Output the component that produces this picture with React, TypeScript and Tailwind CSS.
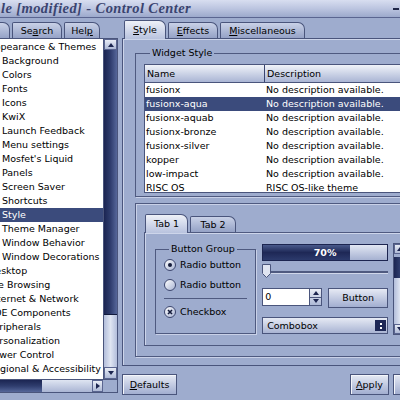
import React from "react";

const tree: [string, boolean][] = [
  ["Appearance & Themes", true],
  ["Background", false],
  ["Colors", false],
  ["Fonts", false],
  ["Icons", false],
  ["KwiX", false],
  ["Launch Feedback", false],
  ["Menu settings", false],
  ["Mosfet's Liquid", false],
  ["Panels", false],
  ["Screen Saver", false],
  ["Shortcuts", false],
  ["Style", false],
  ["Theme Manager", false],
  ["Window Behavior", false],
  ["Window Decorations", false],
  ["Desktop", true],
  ["File Browsing", true],
  ["Internet & Network", true],
  ["KDE Components", true],
  ["Peripherals", true],
  ["Personalization", true],
  ["Power Control", true],
  ["Regional & Accessibility", true],
  ["Security & Privacy", true],
];

const styles = [
  ["fusionx", "No description available."],
  ["fusionx-aqua", "No description available."],
  ["fusionx-aquab", "No description available."],
  ["fusionx-bronze", "No description available."],
  ["fusionx-silver", "No description available."],
  ["kopper", "No description available."],
  ["low-impact", "No description available."],
  ["RISC OS", "RISC OS-like theme"],
];

// underlined mnemonic letter
const Mn = ({ t, i }: { t: string; i: number }) => (
  <>
    {t.slice(0, i)}
    <span className="underline underline-offset-[1px]">{t[i]}</span>
    {t.slice(i + 1)}
  </>
);

const Tri = ({ dir, className = "" }: { dir: "up" | "down" | "right"; className?: string }) => {
  const pts = dir === "up" ? "0,5 3,1 6,5" : dir === "down" ? "0,1 6,1 3,5" : "1,0 5,3 1,6";
  return (
    <svg width="6" height="6" viewBox="0 0 6 6" className={className}>
      <polygon points={pts} fill="currentColor" />
    </svg>
  );
};

function Tab({ w, sel, children }: { w: string; sel?: boolean; children: React.ReactNode }) {
  return (
    <div
      className={`${w} flex items-center justify-center border border-b-0 border-[#4a557c] rounded-tl-[2px] rounded-tr-[7px] ${
        sel
          ? "h-[19px] bg-linear-to-b from-[#eef1f8] to-[#b8c2de] relative z-10 -mb-px"
          : "h-[16px] bg-linear-to-b from-[#c9d1e7] to-[#95a2c6]"
      }`}
    >
      {children}
    </div>
  );
}

function Btn({ w, children }: { w: string; children: React.ReactNode }) {
  return (
    <div
      className={`${w} h-[21px] shrink-0 flex items-center justify-center border border-[#4a557c] bg-linear-to-b from-[#e6eaf4] via-[#c3cbe2] to-[#a2aed0] shadow-[inset_1px_1px_0_#f4f6fb]`}
    >
      {children}
    </div>
  );
}

function ArrowBox({ dir, className = "" }: { dir: "up" | "down" | "right"; className?: string }) {
  return (
    <div
      className={`flex items-center justify-center border border-[#5a6590] bg-linear-to-b from-[#e9edf6] to-[#aeb9d6] text-[#1c2550] ${className}`}
    >
      <Tri dir={dir} />
    </div>
  );
}

export default function App() {
  return (
    <div className="w-[400px] h-[400px] overflow-hidden bg-[#9eacce] text-[9.5px] leading-none text-black font-['DejaVu_Sans',sans-serif] flex flex-col">
      {/* title bar */}
      <div className="h-[18px] shrink-0 flex items-center justify-between border-b border-[#5a6590] bg-linear-to-b from-[#d8def0] via-[#bcc5e0] to-[#9ca9cc]">
        <span className="pl-[1px] text-[14.5px] font-bold italic tracking-[0.4px] text-[#3a4470] font-['Liberation_Serif',serif] whitespace-nowrap">
          le [modified] - Control Center
        </span>
        <span className="w-[6px] h-[2px] bg-[#1e2648] mr-[1px]" />
      </div>

      <div className="flex flex-1 min-h-0">
        {/* left side */}
        <div className="w-[119px] shrink-0 flex flex-col">
          <div className="h-[20px] flex items-end gap-[2px]">
            <div className="w-[10px] h-[16px] border border-b-0 border-l-0 border-[#4a557c] rounded-tr-[7px] bg-linear-to-b from-[#c9d1e7] to-[#95a2c6]" />
            <Tab w="w-[50px]">
              <Mn t="Search" i={2} />
            </Tab>
            <Tab w="w-[36px]">
              <Mn t="Help" i={3} />
            </Tab>
          </div>
          <div className="h-[355px] w-[118px] border border-l-0 border-[#4a557c] flex flex-col">
            <div className="flex flex-1 min-h-0">
              <div className="flex-1 bg-white overflow-hidden pt-[1px]">
                {tree.map(([name, top]) => (
                  <div
                    key={name}
                    className={`h-[14px] flex items-center whitespace-nowrap ${
                      name === "Style" ? "bg-[#3b4b7c] text-white" : ""
                    }`}
                  >
                    <span className={top ? "ml-[-12px]" : "ml-[2px]"}>{name}</span>
                  </div>
                ))}
              </div>
              <div className="w-[14px] flex flex-col border-l border-[#4a557c]">
                <ArrowBox dir="up" className="h-[11px]" />
                <div className="h-[265px] bg-linear-to-r from-[#1b2552] via-[#2f3d6e] to-[#56679a] border-b border-[#111a3c]" />
                <div className="flex-1 bg-linear-to-r from-[#b3bedb] via-[#dfe5f2] to-[#b3bedb]" />
                <ArrowBox dir="down" className="h-[12px]" />
              </div>
            </div>
            <div className="h-[13px] flex border-t border-[#4a557c]">
              <div className="w-[42px] bg-linear-to-b from-[#1b2552] via-[#2f3d6e] to-[#56679a]" />
              <div className="flex-1 bg-linear-to-b from-[#dfe5f2] to-[#aab5d4]" />
              <ArrowBox dir="right" className="w-[11px]" />
              <div className="w-[14px] bg-[#9eacce]" />
            </div>
          </div>
        </div>

        {/* right side */}
        <div className="w-[300px] shrink-0 ml-[3px] flex flex-col">
          <div className="h-[20px] flex items-end gap-[2px] pl-[2px]">
            <Tab w="w-[42px]" sel>
              <Mn t="Style" i={0} />
            </Tab>
            <Tab w="w-[50px]">
              <Mn t="Effects" i={0} />
            </Tab>
            <Tab w="w-[85px]">
              <Mn t="Miscellaneous" i={0} />
            </Tab>
          </div>
          <div className="h-[328px] border border-[#4a557c] shadow-[inset_1px_1px_0_#cdd5ea] px-[12px] pt-[8px] flex flex-col">
            <fieldset className="border border-[#4f5a80] shadow-[1px_1px_0_#c9d1e8] pl-[8px] pt-[5px] pb-[3px]">
              <legend className="ml-[6px] px-[2px] leading-[12px]">Widget Style</legend>
              <div className="border border-[#4a557c] bg-white">
                <div className="h-[18px] flex border-b border-[#4a557c]">
                  <div className="w-[120px] flex items-center pl-[2px] border-r border-[#3a4570] bg-linear-to-b from-[#f0f3f9] to-[#aab5d4]">
                    Name
                  </div>
                  <div className="flex-1 flex items-center pl-[2px] bg-linear-to-b from-[#f0f3f9] to-[#aab5d4]">
                    Description
                  </div>
                </div>
                <div className="h-[109px] overflow-hidden">
                  {styles.map(([n, d]) => (
                    <div
                      key={n}
                      className={`h-[14px] flex items-center whitespace-nowrap ${
                        n === "fusionx-aqua" ? "bg-[#3b4b7c] text-white" : ""
                      }`}
                    >
                      <span className="w-[120px] pl-[1px]">{n}</span>
                      <span className="pl-[1px]">{d}</span>
                    </div>
                  ))}
                </div>
              </div>
            </fieldset>

            {/* preview */}
            <div className="mt-[6px] h-[154px] border border-[#4f5a80] shadow-[inset_1px_1px_0_#c9d1e8,1px_1px_0_#c9d1e8] pl-[8px] pt-[10px]">
              <div className="h-[18px] flex items-end gap-[2px] pl-[1px]">
                <Tab w="w-[43px]" sel>
                  Tab 1
                </Tab>
                <Tab w="w-[46px]">Tab 2</Tab>
              </div>
              <div className="h-[114px] border border-[#4f5a80] shadow-[inset_1px_1px_0_#cdd5ea] pl-[10px] pt-[10px] flex">
                <fieldset className="w-[102px] h-[91px] border border-[#4f5a80] shadow-[1px_1px_0_#c9d1e8] px-[8px]">
                  <legend className="ml-[5px] px-[2px] leading-[12px]">Button Group</legend>
                  <div className="h-[20px] flex items-center gap-[4px]">
                    <span className="w-[12px] h-[12px] rounded-full border border-[#3e4870] bg-linear-to-br from-white to-[#a9b4d3] flex items-center justify-center">
                      <span className="w-[4px] h-[4px] rounded-full bg-[#141b3a]" />
                    </span>
                    Radio button
                  </div>
                  <div className="h-[20px] flex items-center gap-[4px]">
                    <span className="w-[12px] h-[12px] rounded-full border border-[#3e4870] bg-linear-to-br from-white to-[#a9b4d3]" />
                    Radio button
                  </div>
                  <div className="h-[1px] bg-[#4f5a80] my-[3px]" />
                  <div className="h-[20px] flex items-center gap-[4px]">
                    <span className="w-[12px] h-[12px] rounded-full border border-[#3e4870] bg-linear-to-br from-white to-[#a9b4d3] flex items-center justify-center">
                      <svg width="6" height="6" viewBox="0 0 6 6">
                        <path d="M1 1 L5 5 M5 1 L1 5" stroke="#141b3a" strokeWidth="1.6" />
                      </svg>
                    </span>
                    Checkbox
                  </div>
                </fieldset>

                <div className="w-[126px] ml-[6px] flex flex-col">
                  {/* progress */}
                  <div className="mt-[1px] h-[17px] flex border border-[#1c2550] relative">
                    <div className="w-[70%] bg-linear-to-b from-[#4a5a8c] via-[#1e2856] to-[#2c3a6c]" />
                    <div className="flex-1 bg-linear-to-b from-[#e2e7f3] to-[#a6b1d1]" />
                    <span className="absolute inset-0 flex items-center justify-center text-white font-bold">70%</span>
                  </div>
                  {/* slider */}
                  <div className="h-[21px] flex items-center relative">
                    <div className="w-full h-[2px] bg-[#4f5a80] shadow-[0_1px_0_#d0d7ea]" />
                    <svg width="9" height="14" viewBox="0 0 9 14" className="absolute left-0 top-[3px]">
                      <path d="M0.5 0.5 H8.5 V9.5 L4.5 13.5 L0.5 9.5 Z" fill="#dfe4f1" stroke="#4a557c" />
                    </svg>
                  </div>
                  {/* spin + button */}
                  <div className="mt-[6px] flex items-start gap-[6px]">
                    <div className="w-[60px] h-[18px] flex border border-[#4a557c] bg-white">
                      <span className="flex-1 flex items-center pl-[2px]">0</span>
                      <div className="w-[12px] flex flex-col border-l border-[#4a557c] bg-linear-to-b from-[#e9edf6] to-[#aeb9d6] text-[#1c2550]">
                        <div className="flex-1 flex items-center justify-center border-b border-[#4a557c]">
                          <Tri dir="up" />
                        </div>
                        <div className="flex-1 flex items-center justify-center">
                          <Tri dir="down" />
                        </div>
                      </div>
                    </div>
                    <div className="w-[60px] h-[20px] flex items-center justify-center border border-[#4a557c] bg-linear-to-b from-[#e6eaf4] via-[#c3cbe2] to-[#a2aed0]">
                      Button
                    </div>
                  </div>
                  {/* combo */}
                  <div className="mt-[9px] h-[17px] flex items-center border border-[#4a557c] bg-linear-to-b from-[#e6eaf4] to-[#a9b4d3]">
                    <span className="flex-1 pl-[4px]">Combobox</span>
                    <span className="w-[11px] h-[11px] mr-[1px] bg-[#1e2856] flex flex-col items-center justify-center gap-[2px]">
                      <span className="w-[2px] h-[2px] bg-white" />
                      <span className="w-[2px] h-[2px] bg-white" />
                    </span>
                  </div>
                </div>

                <div className="ml-[5px] w-[14px] h-[92px] flex flex-col border border-[#4a557c]">
                  <ArrowBox dir="up" className="h-[10px]" />
                  <div className="h-[21px] mt-[3px] bg-linear-to-r from-[#1b2552] via-[#2f3d6e] to-[#56679a]" />
                  <div className="flex-1 bg-linear-to-r from-[#b3bedb] via-[#dfe5f2] to-[#b3bedb]" />
                  <ArrowBox dir="down" className="h-[10px]" />
                </div>
              </div>
            </div>
          </div>

          {/* bottom buttons */}
          <div className="flex items-start pt-[8px]">
            <Btn w="w-[55px]">
              <Mn t="Defaults" i={0} />
            </Btn>
            <div className="ml-[173px]">
              <Btn w="w-[39px]">
                <Mn t="Apply" i={0} />
              </Btn>
            </div>
            <div className="ml-[4px]">
              <Btn w="w-[50px]">
                <Mn t="Reset" i={0} />
              </Btn>
            </div>
          </div>
        </div>
      </div>
    </div>
  );
}
